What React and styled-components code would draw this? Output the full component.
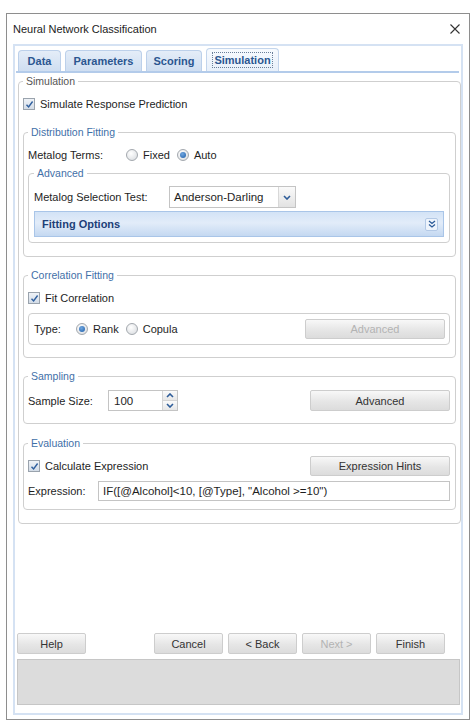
import React from 'react';
import styled, { createGlobalStyle } from 'styled-components';

const GlobalStyle = createGlobalStyle`
  html, body { margin: 0; padding: 0; background: #ffffff; }
  body { font-family: "Liberation Sans", Arial, sans-serif; font-size: 11px; color: #1e1e1e; }
  * { box-sizing: border-box; }
`

const Window = styled.div`
  margin: 13px 0 0 6px;
  width: 464px;
  height: 707px;
  border: 1px solid #8e8e8e;
  background: #fff;
  display: flex;
  flex-direction: column;
`

const TitleBar = styled.div`
  height: 30px;
  display: flex;
  align-items: center;
  justify-content: space-between;
  padding: 0 9px 0 6px;
  font-size: 11px;
  color: #222;
`

const Panel = styled.div`
  flex: 1;
  margin: 0 6px 4px 6px;
  border: 2px solid #d5e2f3;
  display: flex;
  flex-direction: column;
  padding: 3px 0 8px 1px;
`

const TabStrip = styled.div`
  display: flex;
  gap: 4px;
  padding-left: 2px;
  margin-right: 2px;
  border-bottom: 2px solid #b3cbea;
  height: 24px;
  align-items: flex-end;
`

const Tab = styled.div`
  width: ${p => p.w}px;
  height: ${p => (p.active ? 23 : 21)}px;
  border: 1px solid ${p => (p.active ? '#c3d5ec' : '#bcd0ea')};
  border-bottom: none;
  border-radius: 4px 4px 0 0;
  background: ${p => (p.active ? 'linear-gradient(#f7fafe, #e8f0fa)' : 'linear-gradient(#e4edf8, #cfdef1)')};
  color: #2b5690;
  font-weight: bold;
  font-size: 11px;
  display: flex;
  align-items: center;
  justify-content: center;
  span {
    padding: 1px 1px;
    border: 1px ${p => (p.active ? 'dotted #6a7f99' : 'solid transparent')};
  }
`

const Content = styled.div`
  flex: 1;
  padding: 1px 0 0 2px;
`

const Group = styled.fieldset`
  margin: ${p => p.mt || 0}px 0 0 0;
  min-width: 0;
  border: 1px solid #cfcfcf;
  border-radius: 4px;
  padding: ${p => p.pad};
  display: flex;
  flex-direction: column;
  legend {
    font-size: 10.5px;
    line-height: 14px;
    color: ${p => (p.plain ? '#555' : '#3f70a8')};
    padding: 0 3px;
    margin-left: 0;
  }
`

const InnerBox = styled.div`
  margin-top: 5px;
  height: 32px;
  border: 1px solid #cfcfcf;
  border-radius: 4px;
  display: flex;
  align-items: center;
  padding: 0 4px 0 5px;
`

const Row = styled.div`
  display: flex;
  align-items: center;
  height: ${p => p.h || 20}px;
  margin-top: ${p => p.mt || 0}px;
`

const Label = styled.span`
  width: ${p => (p.w ? `${p.w}px` : 'auto')};
  flex-shrink: 0;
  white-space: nowrap;
`

const Option = styled.label`
  display: flex;
  align-items: center;
  gap: 5px;
  margin-right: ${p => p.mr || 0}px;
`

const Box = styled.span`
  width: 12px;
  height: 12px;
  border: 1px solid #9aa3ad;
  background: linear-gradient(#eef2f7, #d3dce7);
  display: inline-flex;
  align-items: center;
  justify-content: center;
`

const Radio = styled.span`
  width: 12px;
  height: 12px;
  border-radius: 50%;
  border: 1px solid #a3a8ae;
  background: radial-gradient(circle at 40% 35%, #ffffff, #d6d9dd);
  display: inline-flex;
  align-items: center;
  justify-content: center;
  &::after {
    content: '';
    display: ${p => (p.on ? 'block' : 'none')};
    width: 6px;
    height: 6px;
    border-radius: 50%;
    background: radial-gradient(circle at 40% 35%, #6fa6e0, #1f5ea8);
  }
`

const Button = styled.div`
  width: ${p => p.w}px;
  height: ${p => p.h || 21}px;
  margin-left: ${p => (p.push ? 'auto' : '0')};
  border: 1px solid #cdcdcd;
  border-radius: 2px;
  background: linear-gradient(#f8f8f8, #e6e6e6 55%, #dcdcdc);
  color: ${p => (p.disabled ? '#b3b3b3' : '#333')};
  font-size: 11px;
  display: flex;
  align-items: center;
  justify-content: center;
  flex-shrink: 0;
`

const Select = styled.div`
  width: 127px;
  height: 22px;
  border: 1px solid #c4c4c4;
  display: flex;
  align-items: stretch;
  background: #fff;
  span { flex: 1; padding-left: 4px; display: flex; align-items: center; font-size: 11.5px; }
`

const SelectArrow = styled.div`
  width: 17px;
  background: linear-gradient(#fafafa, #e2e2e2);
  border-left: 1px solid #d8d8d8;
  display: flex;
  align-items: center;
  justify-content: center;
`

const Spin = styled.div`
  width: 70px;
  height: 21px;
  border: 1px solid #c4c4c4;
  display: flex;
  span { flex: 1; padding-left: 5px; display: flex; align-items: center; font-size: 11.5px; }
`

const SpinBtns = styled.div`
  width: 15px;
  display: flex;
  flex-direction: column;
  border-left: 1px solid #d4d4d4;
  div {
    flex: 1;
    display: flex;
    align-items: center;
    justify-content: center;
    background: linear-gradient(#fbfbfb, #e7e7e7);
  }
  div + div { border-top: 1px solid #d4d4d4; }
`

const TextInput = styled.div`
  flex: 1;
  height: 20px;
  border: 1px solid #c4c4c4;
  padding-left: 4px;
  display: flex;
  align-items: center;
  font-size: 11.5px;
`

const FittingBar = styled.div`
  margin-top: 3px;
  height: 26px;
  border: 1px solid #a9c5e8;
  background: linear-gradient(#d3e3f6, #e2ecf9 45%, #c4d8f1);
  display: flex;
  align-items: center;
  justify-content: space-between;
  padding: 0 5px 0 7px;
  color: #1d3f78;
  font-weight: bold;
  font-size: 11px;
`

const ToggleIcon = styled.span`
  width: 13px;
  height: 13px;
  border: 1px solid #b3c9e6;
  border-radius: 2px;
  background: #eef4fc;
  display: inline-flex;
  align-items: center;
  justify-content: center;
`

const Footer = styled.div`
  display: flex;
  flex-direction: column;
  padding: 0 1px 0 1px;
`

const ButtonRow = styled.div`
  display: flex;
  gap: 5px;
  padding-right: 15px;
`

const Status = styled.div`
  margin-top: 5px;
  height: 46px;
  border: 1px solid #c6c6c6;
  background: #dcdcdc;
`

const Tick = () => (
  <svg width="9" height="9" viewBox="0 0 9 9">
    <path d="M1.5 4.8 L3.6 7 L7.6 1.5" fill="none" stroke="#2f5f9e" strokeWidth="1.4" />
  </svg>
)

const Check = ({ children }) => (
  <Option>
    <Box><Tick /></Box>
    {children}
  </Option>
)

const Chevron = ({ up }) => (
  <svg width="8" height="5" viewBox="0 0 8 5">
    <path d={up ? 'M1 4 L4 1 L7 4' : 'M1 1 L4 4 L7 1'} fill="none" stroke="#2d5c99" strokeWidth="1.6" />
  </svg>
)

export default function App() {
  return (
    <>
      <GlobalStyle />
      <Window>
        <TitleBar>
          <span>Neural Network Classification</span>
          <svg width="10" height="10" viewBox="0 0 10 10">
            <path d="M0.5 0.5 L9.5 9.5 M9.5 0.5 L0.5 9.5" stroke="#333" strokeWidth="1.1" />
          </svg>
        </TitleBar>
        <Panel>
          <TabStrip>
            <Tab w={43}><span>Data</span></Tab>
            <Tab w={77}><span>Parameters</span></Tab>
            <Tab w={56}><span>Scoring</span></Tab>
            <Tab w={73} active><span>Simulation</span></Tab>
          </TabStrip>
          <Content>
            <Group plain pad="6px 4px 13px 4px">
              <legend>Simulation</legend>
              <Row><Check>Simulate Response Prediction</Check></Row>

              <Group mt={11} pad="6px 5px 13px 4px">
                <legend>Distribution Fitting</legend>
                <Row>
                  <Label w={98}>Metalog Terms:</Label>
                  <Option mr={7}><Radio />Fixed</Option>
                  <Option><Radio on />Auto</Option>
                </Row>
                <Group mt={1} pad="6px 5px 5px 5px">
                  <legend>Advanced</legend>
                  <Row h={22}>
                    <Label w={135}>Metalog Selection Test:</Label>
                    <Select>
                      <span>Anderson-Darling</span>
                      <SelectArrow><Chevron /></SelectArrow>
                    </Select>
                  </Row>
                  <FittingBar>
                    Fitting Options
                    <ToggleIcon>
                      <svg width="8" height="8" viewBox="0 0 8 8">
                        <path d="M1 1 L4 3.5 L7 1 M1 4.5 L4 7 L7 4.5" fill="none" stroke="#2d5c99" strokeWidth="1.3" />
                      </svg>
                    </ToggleIcon>
                  </FittingBar>
                </Group>
              </Group>

              <Group mt={11} pad="6px 5px 12px 4px">
                <legend>Correlation Fitting</legend>
                <Row><Check>Fit Correlation</Check></Row>
                <InnerBox>
                  <Label w={42}>Type:</Label>
                  <Option mr={7}><Radio on />Rank</Option>
                  <Option><Radio />Copula</Option>
                  <Button w={140} h={20} push disabled>Advanced</Button>
                </InnerBox>
              </Group>

              <Group mt={11} pad="7px 5px 12px 4px">
                <legend>Sampling</legend>
                <Row h={21}>
                  <Label w={80}>Sample Size:</Label>
                  <Spin>
                    <span>100</span>
                    <SpinBtns>
                      <div><Chevron up /></div>
                      <div><Chevron /></div>
                    </SpinBtns>
                  </Spin>
                  <Button w={140} push>Advanced</Button>
                </Row>
              </Group>

              <Group mt={12} pad="6px 5px 8px 4px">
                <legend>Evaluation</legend>
                <Row>
                  <Check>Calculate Expression</Check>
                  <Button w={140} h={20} push>Expression Hints</Button>
                </Row>
                <Row mt={5}>
                  <Label w={70}>Expression:</Label>
                  <TextInput>IF([@Alcohol]&lt;10, [@Type], "Alcohol &gt;=10")</TextInput>
                </Row>
              </Group>
            </Group>
          </Content>
          <Footer>
            <ButtonRow>
              <Button w={69}>Help</Button>
              <Button w={69} push>Cancel</Button>
              <Button w={69}>&lt; Back</Button>
              <Button w={69} disabled>Next &gt;</Button>
              <Button w={69}>Finish</Button>
            </ButtonRow>
            <Status />
          </Footer>
        </Panel>
      </Window>
    </>
  );
}
